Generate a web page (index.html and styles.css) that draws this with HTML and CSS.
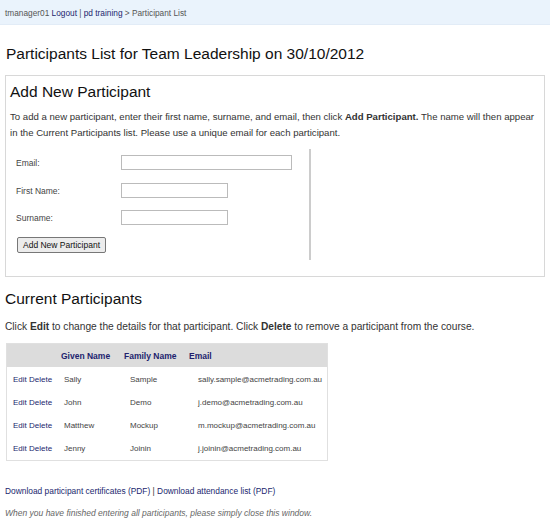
FILE: index.html
```html
<!DOCTYPE html>
<html lang="en">
<head>
  <meta charset="UTF-8">
  <title>Participant List</title>
  <link rel="stylesheet" href="styles.css">
</head>
<body>

<div class="topbar">
  tmanager01 <a href="#">Logout</a> | <a href="#">pd training</a> &gt; Participant List
</div>

<div class="page">
  <h1>Participants List for Team Leadership on 30/10/2012</h1>

  <div class="addbox">
    <h2>Add New Participant</h2>
    <p>To add a new participant, enter their first name, surname, and email, then click <b>Add Participant.</b> The name will then appear in the Current Participants list. Please use a unique email for each participant.</p>

    <form class="addform">
      <div class="row">
        <label for="email">Email:</label>
        <input type="text" id="email" class="wide">
      </div>
      <div class="row">
        <label for="first">First Name:</label>
        <input type="text" id="first">
      </div>
      <div class="row">
        <label for="surname">Surname:</label>
        <input type="text" id="surname">
      </div>
      <button type="button" class="addbtn">Add New Participant</button>
    </form>
  </div>

  <h2 class="current">Current Participants</h2>
  <p class="help">Click <b>Edit</b> to change the details for that participant. Click <b>Delete</b> to remove a participant from the course.</p>

  <table class="people">
    <tr>
      <th class="c1"></th>
      <th class="c2">Given Name</th>
      <th class="c3">Family Name</th>
      <th class="c4">Email</th>
    </tr>
    <tr>
      <td><a href="#">Edit</a> <a href="#">Delete</a></td>
      <td>Sally</td>
      <td>Sample</td>
      <td>sally.sample@acmetrading.com.au</td>
    </tr>
    <tr>
      <td><a href="#">Edit</a> <a href="#">Delete</a></td>
      <td>John</td>
      <td>Demo</td>
      <td>j.demo@acmetrading.com.au</td>
    </tr>
    <tr>
      <td><a href="#">Edit</a> <a href="#">Delete</a></td>
      <td>Matthew</td>
      <td>Mockup</td>
      <td>m.mockup@acmetrading.com.au</td>
    </tr>
    <tr>
      <td><a href="#">Edit</a> <a href="#">Delete</a></td>
      <td>Jenny</td>
      <td>Joinin</td>
      <td>j.joinin@acmetrading.com.au</td>
    </tr>
  </table>

  <p class="downloads"><a href="#">Download participant certificates (PDF)</a> | <a href="#">Download attendance list (PDF)</a></p>
  <p class="note">When you have finished entering all participants, please simply close this window.</p>
</div>

</body>
</html>
```

FILE: styles.css
```css
body {
  margin: 0;
  font-family: "Liberation Sans", Arial, sans-serif;
  font-size: 10px;
  color: #333;
  background: #fff;
}

a {
  color: #221f6e;
  text-decoration: none;
}

.topbar {
  height: 22px;
  line-height: 22px;
  padding: 2px 0 0 5px;
  font-size: 8.3px;
  color: #555;
  background: #eaf3fc;
  border-bottom: 1px solid #e2ecf7;
}

.page {
  padding: 0 5px;
}

h1 {
  margin: 19px 1px 11px;
  font-size: 15.5px;
  font-weight: normal;
  line-height: 20px;
  color: #111;
}

h2 {
  margin: 0;
  font-size: 15.5px;
  font-weight: normal;
  line-height: 20px;
  color: #111;
}

p {
  margin: 0;
  line-height: 16px;
}

.addbox {
  box-sizing: border-box;
  height: 202px;
  padding: 6px 4px 0;
  border: 1px solid #d8d8d8;
}

.addbox p {
  margin-top: 7px;
  font-size: 9.6px;
}

.addform {
  box-sizing: border-box;
  width: 301px;
  margin-top: 8px;
  padding: 6px 0 7px 6px;
  border-right: 2px solid #cccccc;
}

.row {
  display: flex;
  align-items: center;
  height: 15px;
  margin-bottom: 12px;
}

.row:first-child {
  margin-bottom: 13px;
}

.row label {
  width: 105px;
  font-size: 8.5px;
  color: #444;
}

.row input {
  box-sizing: border-box;
  width: 107px;
  height: 15px;
  padding: 0 2px;
  border: 1px solid #bbb;
  font-size: 8.5px;
}

.row input.wide {
  width: 171px;
}

.addbtn {
  display: block;
  box-sizing: border-box;
  width: 89px;
  height: 16px;
  margin-left: 1px;
  padding: 0;
  font-family: "Liberation Sans", Arial, sans-serif;
  font-size: 8.5px;
  color: #111;
  background: #ececec;
  border: 1px solid #777;
  border-radius: 2px;
}

.current {
  margin-top: 12px;
}

.help {
  margin-top: 10px;
  font-size: 10.2px;
}

.people {
  table-layout: fixed;
  width: 322px;
  margin: 8px 0 0 1px;
  border-collapse: collapse;
  border: 1px solid #e0e0e0;
  font-size: 8px;
}

.people th {
  height: 23px;
  padding: 0 0 0 3px;
  text-align: left;
  background: #dcdcdc;
  color: #221f6e;
  font-size: 8.5px;
}

.people td {
  height: 23px;
  padding: 0 0 0 6px;
  color: #444;
  white-space: nowrap;
}

.people tr:nth-child(2) td {
  padding-top: 1px;
}

.people td:nth-child(3) {
  padding-left: 9px;
}

.people td:nth-child(4) {
  padding-left: 12px;
}

.people .c1 { width: 48px; }
.people .c2 { width: 60px; }
.people .c3 { width: 62px; }

.downloads {
  margin-top: 22px;
  font-size: 8.4px;
}

.note {
  margin-top: 6px;
  font-size: 8.5px;
  font-style: italic;
  color: #666;
}
```
